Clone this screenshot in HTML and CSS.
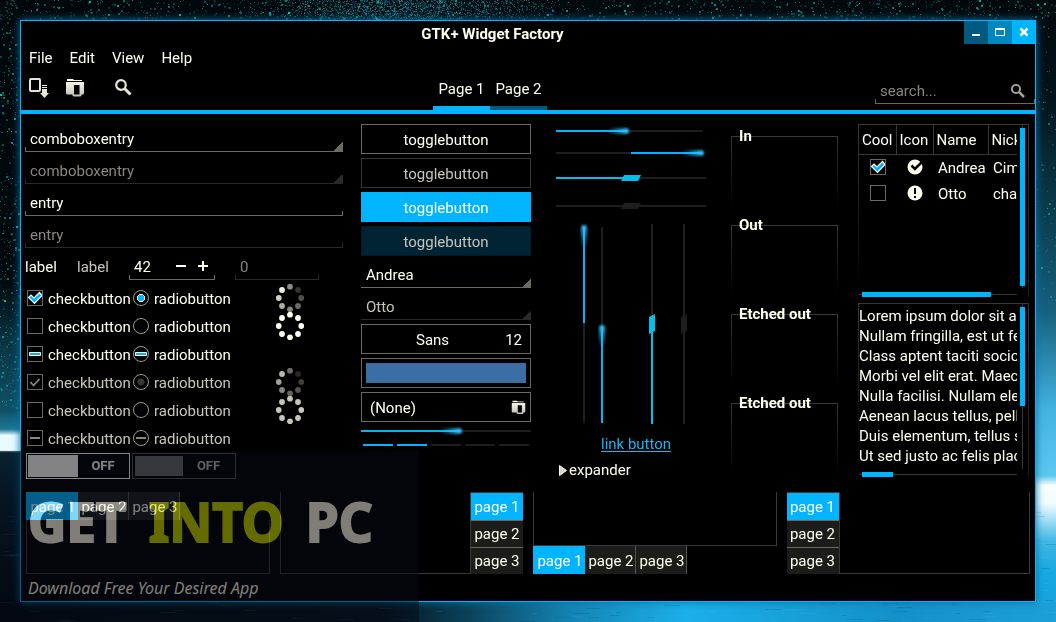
FILE: index.html
```html
<!DOCTYPE html>
<html lang="en">
<head>
<meta charset="utf-8">
<title>GTK+ Widget Factory</title>
<link rel="stylesheet" href="styles.css">
</head>
<body>
<canvas class="wallpaper" id="wallpaper" aria-hidden="true"></canvas>
<svg class="defs" aria-hidden="true">
  <linearGradient id="bone" x1="0" y1="0" x2="0" y2="1"><stop offset="0" stop-color="#fffff0"/><stop offset="1" stop-color="#c4c0b4"/></linearGradient>
  <symbol id="i-magnify" viewBox="0 0 20 20"><circle cx="7" cy="7" r="4.800" fill="none" stroke="currentColor" stroke-width="2.200"/><path d="M10.500 10.500L16.500 16.500" stroke="currentColor" stroke-width="3"/></symbol>
  <symbol id="i-folder" viewBox="0 0 20 20"><path fill="url(#bone)" fill-rule="evenodd" d="M2 1h6l1 1h8v1H2zM1 4h18v11.500l-1 1h-1.500v1l-1 1h-7l-1-1v-1H2l-1-1zM9 7v9.500h5.500V7z"/></symbol>
  <symbol id="i-add" viewBox="0 0 20 20"><rect x="1" y="1" width="10" height="12" rx="1" fill="none" stroke="currentColor" stroke-width="2"/><path fill="currentColor" d="M13 7h5v1h-5zM13 9h5v1h-5zM13 11h5v4h2l-4.500 5-4.500-5h2z"/></symbol>
  <symbol id="i-ring" viewBox="0 0 28 28"><g fill="currentColor"><circle cx="14" cy="2.700" r="2.900"/><circle cx="22" cy="6" r="2.900"/><circle cx="25.300" cy="14" r="2.900"/><circle cx="22" cy="22" r="2.900"/><circle cx="14" cy="25.300" r="2.900"/><circle cx="6" cy="22" r="2.900"/><circle cx="2.700" cy="14" r="2.900"/><circle cx="6" cy="6" r="2.900"/></g></symbol>
  <symbol id="i-spin" viewBox="0 0 28 28"><g fill="currentColor"><circle cx="14" cy="2.700" r="2.900" opacity=".55"/><circle cx="22" cy="6" r="2.900" opacity=".2"/><circle cx="25.300" cy="14" r="2.900" opacity=".32"/><circle cx="22" cy="22" r="2.900" opacity=".42"/><circle cx="14" cy="25.300" r="2.900" opacity=".52"/><circle cx="6" cy="22" r="2.900" opacity=".68"/><circle cx="2.700" cy="14" r="2.900" opacity=".82"/><circle cx="6" cy="6" r="2.900" opacity=".94"/></g></symbol>
</svg>
<main class="window">
  <header class="header">
    <div class="titlebar">
      <h1 class="title">GTK+ Widget Factory</h1>
      <button class="wm wm-min" aria-label="Minimize"><svg width="24" height="23"><path d="M8 13h8v2H8z" fill="#fff"/></svg></button>
      <button class="wm wm-max" aria-label="Maximize"><svg width="24" height="23"><path d="M7 7h10v8H7zM8 9v5h8V9z" fill="#fff" fill-rule="evenodd"/></svg></button>
      <button class="wm wm-close" aria-label="Close"><svg width="24" height="23"><path d="M8.500 7.500l7 7M15.500 7.500l-7 7" stroke="#fff" stroke-width="2.600"/></svg></button>
    </div>
    <nav class="menubar"><button>File</button><button>Edit</button><button>View</button><button>Help</button></nav>
    <div class="toolbar">
      <div class="tools">
        <button aria-label="Add"><svg width="20" height="20"><use href="#i-add"/></svg></button>
        <button aria-label="Open"><svg width="20" height="20"><use href="#i-folder"/></svg></button>
        <button class="tool-apart" aria-label="Find"><svg width="20" height="20"><use href="#i-magnify"/></svg></button>
      </div>
      <div class="pages"><button class="page-on">Page 1</button><button>Page 2</button></div>
      <label class="search"><input class="line-entry" type="search" placeholder="search..." aria-label="Search"><svg width="17" height="17"><use href="#i-magnify"/></svg></label>
    </div>
  </header>

  <section class="columns">
    <div class="col">
      <input class="line-entry combo" value="comboboxentry" aria-label="Combo entry">
      <input class="line-entry combo" value="comboboxentry" aria-label="Combo entry, inactive" disabled>
      <input class="line-entry" value="entry" aria-label="Entry">
      <input class="line-entry" value="entry" aria-label="Entry, inactive" disabled>
      <div class="spin-row">
        <span class="lab">label</span><span class="lab dim">label</span>
        <div class="spin"><input class="line-entry" value="42" aria-label="Number"><button aria-label="Decrease"><svg width="12" height="12"><path d="M1 5h10v2H1z" fill="currentColor"/></svg></button><button aria-label="Increase"><svg width="12" height="12"><path d="M1 5h10v2H1zM5 1h2v10H5z" fill="currentColor"/></svg></button></div>
        <input class="line-entry spin-off" value="0" aria-label="Number, inactive" disabled>
      </div>
      <div class="checks">
        <label><input type="checkbox" class="box tick" checked>checkbutton</label><label><input type="radio" name="a" class="box round dot" checked>radiobutton</label><svg class="ring"><use href="#i-spin"/></svg>
        <label><input type="checkbox" class="box">checkbutton</label><label><input type="radio" name="a" class="box round">radiobutton</label><svg class="ring"><use href="#i-ring"/></svg>
        <label><input type="checkbox" class="box mixed">checkbutton</label><label><input type="radio" name="b" class="box round mixed">radiobutton</label><span></span>
        <label class="dim"><input type="checkbox" class="box tick-off" checked disabled>checkbutton</label><label class="dim"><input type="radio" name="c" class="box round dot-off" checked disabled>radiobutton</label><svg class="ring dim"><use href="#i-spin"/></svg>
        <label class="dim"><input type="checkbox" class="box" disabled>checkbutton</label><label class="dim"><input type="radio" name="c" class="box round" disabled>radiobutton</label><svg class="ring dim"><use href="#i-ring"/></svg>
        <label class="dim"><input type="checkbox" class="box mixed-off" disabled>checkbutton</label><label class="dim"><input type="radio" name="d" class="box round mixed-off" disabled>radiobutton</label><span></span>
      </div>
      <div class="switches">
        <button class="switch" role="switch" aria-checked="false"><span class="knob"></span><span class="state">OFF</span></button>
        <button class="switch" role="switch" aria-checked="false" disabled><span class="knob"></span><span class="state">OFF</span></button>
      </div>
    </div>

    <div class="col">
      <button class="btn">togglebutton</button>
      <button class="btn" disabled>togglebutton</button>
      <button class="btn btn-on">togglebutton</button>
      <button class="btn btn-on" disabled>togglebutton</button>
      <select class="drop" aria-label="Name"><option>Andrea</option></select>
      <select class="drop" aria-label="Name, inactive" disabled><option>Otto</option></select>
      <button class="btn font-btn"><span>Sans</span><span>12</span></button>
      <button class="btn color-btn" aria-label="Pick a color"><span class="swatch"></span></button>
      <button class="btn file-btn"><span>(None)</span><svg width="15" height="15"><use href="#i-folder"/></svg></button>
      <div class="bar bar-spaced" role="progressbar"><span class="fill" style="width:58%"></span></div>
      <div class="levels"><i class="lit"></i><i class="lit"></i><i></i><i></i><i></i></div>
    </div>

    <div class="col gauges">
      <div class="bar" role="progressbar"><span class="fill" style="width:48%"></span></div>
      <div class="bar bar-second" role="progressbar"><span class="fill" style="width:48%;margin-left:51%"></span></div>
      <input type="range" class="scale" value="50" aria-label="Scale">
      <input type="range" class="scale" value="50" aria-label="Scale, inactive" disabled>
      <div class="verticals">
        <div class="vbar"><span class="vfill" style="height:49%"></span></div>
        <div class="vbar"><span class="vfill vfill-end" style="height:49%"></span></div>
        <input type="range" class="vscale" value="50" aria-label="Vertical scale">
        <input type="range" class="vscale" value="50" aria-label="Vertical scale, inactive" disabled>
      </div>
      <a class="link" href="#">link button</a>
      <details class="expander"><summary><svg width="8" height="11"><path d="M.5.5L7.500 5.500.5 10.500z" fill="#d8d4c8" stroke="#fffff0"/></svg>expander</summary></details>
    </div>

    <div class="col frames">
      <fieldset class="frame"><legend>In</legend></fieldset>
      <fieldset class="frame"><legend>Out</legend></fieldset>
      <fieldset class="frame"><legend>Etched out</legend></fieldset>
      <fieldset class="frame"><legend>Etched out</legend></fieldset>
    </div>

    <div class="col views">
      <div class="view tree">
        <div class="clip">
          <table>
            <thead><tr><th>Cool</th><th>Icon</th><th>Name</th><th>Nick</th></tr></thead>
            <tbody>
              <tr><td><input type="checkbox" class="box tick" aria-label="Andrea is cool" checked></td><td><svg width="16" height="16"><circle cx="8" cy="8" r="7.500" fill="#fffff0"/><path d="M4.500 6.500l3.400 3.400L16 2" fill="none" stroke="#000" stroke-width="2.600"/></svg></td><td>Andrea</td><td>Cimi</td></tr>
              <tr><td><input type="checkbox" class="box" aria-label="Otto is cool"></td><td><svg width="16" height="16"><circle cx="8" cy="8" r="7.500" fill="#fffff0"/><path d="M7 3h2v6H7zM7 11h2v2H7z" fill="#000"/></svg></td><td>Otto</td><td>chaotic</td></tr>
            </tbody>
          </table>
        </div>
        <div class="vscroll"><span style="height:99%"></span></div>
        <div class="hscroll"><span style="width:83%"></span></div>
      </div>
      <div class="view text">
        <div class="clip">Lorem ipsum dolor sit amet<br>Nullam fringilla, est ut feugiat<br>Class aptent taciti sociosqu<br>Morbi vel elit erat. Maecenas<br>Nulla facilisi. Nullam eleifend<br>Aenean lacus tellus, pellentesque<br>Duis elementum, tellus sit<br>Ut sed justo ac felis placerat</div>
        <div class="vscroll"><span style="height:61%"></span></div>
        <div class="hscroll"><span style="width:20%"></span></div>
      </div>
    </div>
  </section>

  <section class="books">
    <div class="book top"><div class="tabs"><button class="on">page 1</button><button>page 2</button><button>page 3</button></div><div class="leaf"></div></div>
    <div class="book right"><div class="leaf"></div><div class="tabs"><button class="on">page 1</button><button>page 2</button><button>page 3</button></div></div>
    <div class="book bottom"><div class="leaf"></div><div class="tabs"><button class="on">page 1</button><button>page 2</button><button>page 3</button></div></div>
    <div class="book left"><div class="tabs"><button class="on">page 1</button><button>page 2</button><button>page 3</button></div><div class="leaf"></div></div>
  </section>
</main>
<aside class="banner">
  <p class="banner-name"><span>GET</span><span class="lime">INTO</span><span>PC</span></p>
  <p class="banner-line">Download Free Your Desired App</p>
</aside>
<script src="wallpaper.js"></script>
</body>
</html>
```
FILE: styles.css
```css
* { box-sizing: border-box; }
body {
  margin: 0;
  min-height: 100vh;
  padding: 20px;
  display: flex;
  position: relative;
  background: #00060a;
  color: #fffff0;
  font: 15px/20px Roboto, "Liberation Sans", sans-serif;
}
button, input, select { font: inherit; color: inherit; background: none; border: 0; margin: 0; padding: 0; outline: 0; border-radius: 0; }
svg { display: block; }
.defs { position: absolute; width: 0; height: 0; }
.wallpaper { position: absolute; left: 0; top: 0; width: 100%; height: 100%; }
.dim { color: #c8c4b8; }

.window {
  flex: 1;
  min-width: 0;
  position: relative;
  display: flex;
  flex-direction: column;
  background: #000;
  border: 1px solid #00b4ff;
  box-shadow: 0 0 8px #0077b0;
}

/* header */
.header { border-bottom: 4px solid #00b4ff; }
.titlebar { display: flex; height: 24px; margin-right: -1px; }
.title { flex: 1; margin: 0; padding-top: 3px; text-align: center; font-size: 15px; font-weight: 700; line-height: 20px; }
.wm { width: 24px; height: 23px; }
.wm-min { background: #005a80; }
.wm-max { background: #0087bf; }
.wm-close { background: #00b4ff; }
.menubar { display: flex; gap: 17px; height: 26px; padding-left: 8px; }
.toolbar { display: grid; grid-template-columns: 412fr 114px 488fr; height: 39px; }
.tools { display: flex; gap: 16px; padding: 7px 8px 0; color: #e8e4d8; align-items: flex-start; }
.tool-apart { margin-left: 13px; }
.pages { display: flex; padding-top: 3px; }
.pages button { flex: 1; border-bottom: 4px solid #005a80; padding-bottom: 2px; }
.pages .page-on { border-color: #00b4ff; }
.search { position: relative; justify-self: end; width: 160px; padding-top: 5px; color: #a8a498; }
.search svg { position: absolute; right: 8px; top: 12px; }
.search ::placeholder { color: #8a867c; opacity: 1; }

/* entries */
.line-entry {
  --line: #6c6960;
  display: block;
  width: 100%;
  height: 28px;
  padding: 2px 5px 0;
  border-bottom: 1px solid var(--line);
  background: linear-gradient(var(--line), var(--line)) left bottom / 1px 4px no-repeat, linear-gradient(var(--line), var(--line)) right bottom / 1px 4px no-repeat;
}
.line-entry:disabled { --line: #2a2a28; color: #8a867c; }
.combo { background: linear-gradient(135deg, transparent 50%, #6c6960 50%) right bottom / 9px 9px no-repeat, linear-gradient(#6c6960, #6c6960) left bottom / 1px 4px no-repeat; }
.combo:disabled { background: linear-gradient(135deg, transparent 50%, #2a2a28 50%) right bottom / 9px 9px no-repeat, linear-gradient(#2a2a28, #2a2a28) left bottom / 1px 4px no-repeat; }
.drop { appearance: none; width: 100%; height: 28px; padding: 2px 5px 0; border-bottom: 1px solid #6c6960; background: linear-gradient(135deg, transparent 50%, #6c6960 50%) right bottom / 9px 9px no-repeat; }
.drop:disabled { border-color: #2a2a28; color: #c8c4b8; opacity: 1; background-image: linear-gradient(135deg, transparent 50%, #2a2a28 50%); }

/* columns */
.columns {
  display: grid;
  grid-template-columns: 318fr 170fr 164fr 107fr 173fr;
  column-gap: 18px;
  height: 378px;
  padding: 10px 6px 0 4px;
}
.col { display: flex; flex-direction: column; gap: 4px; min-width: 0; }
.spin-row { display: flex; align-items: flex-start; height: 29px; }
.lab { width: 52px; padding-top: 5px; }
.spin { display: flex; position: relative; width: 86px; margin-right: 20px; }
.spin button { position: absolute; right: 28px; top: 8px; }
.spin button + button { right: 6px; }
.spin-off { width: 84px; }
.checks { display: grid; grid-template-columns: 106px 108px 1fr; grid-auto-rows: 28px; padding-left: 2px; margin-top: -1px; }
.checks label { display: flex; gap: 5px; align-items: center; padding-top: 2px; }
.checks .box { margin-bottom: 2px; }
.ring { width: 28px; height: 28px; margin-left: 35px; overflow: visible; }
.box { appearance: none; flex: none; display: block; width: 16px; height: 16px; border: 1px solid #6c6960; background: center / 16px 16px no-repeat; background-origin: border-box; }
.round { border-color: #9c988c; border-radius: 50%; }
.tick { background-image: url("data:image/svg+xml,%3Csvg xmlns='http://www.w3.org/2000/svg' viewBox='0 0 16 16'%3E%3Cpath d='M1.500 7.500L4 5 7 8 12.500 2.500 15 5.500 7.500 13.500z' fill='%2300b4ff' stroke='%23fff' stroke-width='1.200'/%3E%3C/svg%3E"); }
.tick-off { background-image: url("data:image/svg+xml,%3Csvg xmlns='http://www.w3.org/2000/svg' viewBox='0 0 16 16'%3E%3Cpath d='M3.500 8l3 3.500 6-6.500' fill='none' stroke='%238c887c' stroke-width='1.800'/%3E%3C/svg%3E"); }
.mixed { background-image: url("data:image/svg+xml,%3Csvg xmlns='http://www.w3.org/2000/svg' viewBox='0 0 16 16'%3E%3Cpath d='M2.500 6.500h11v3h-11z' fill='%2300b4ff' stroke='%23fff'/%3E%3C/svg%3E"); }
.mixed-off { background-image: linear-gradient(#8c887c, #8c887c); background-size: 10px 2px; }
.dot { background-image: radial-gradient(circle, #00b4ff 3px, #fff 3px, #fff 4px, transparent 4px); }
.dot-off { background-image: radial-gradient(circle, #3a3834 3px, transparent 4px); }
.switches { display: flex; gap: 2px; margin-top: -3px; padding-left: 1px; }
.switch { display: flex; width: 104px; height: 26px; border: 1px solid #fffff0; padding: 1px; font-size: 13px; font-weight: 700; align-items: center; }
.switch:disabled { border-color: #55534c; color: #a8a498; }
.knob { width: 50px; height: 22px; background: #fffaf0; }
.switch:disabled .knob { width: 48px; height: 20px; margin-left: 1px; background: #666; }
.state { flex: 1; color: #fffff0; }
.switch:disabled .state { color: #b8b4a8; }

/* buttons */
.btn { display: block; flex: none; width: 100%; height: 30px; border: 1px solid #6c6960; padding: 1px 0 0; }
.btn:disabled { color: #c8c4b8; border-color: #363530; }
.btn-on { background: #00b4ff; border-color: #00b4ff; }
.btn-on:disabled { background: #002433; border-color: #001c28; }
.font-btn { display: flex; align-items: center; padding: 2px 8px 0; }
.font-btn span:first-child { flex: 1; padding-right: 10px; }
.color-btn { padding: 4px; }
.swatch { display: block; height: 20px; background: #3a6ea5; }
.file-btn { display: flex; align-items: center; justify-content: space-between; padding: 1px 4px 0 8px; }
.bar { height: 2px; background: #1e1e1e; }
.bar-spaced { margin-top: 4px; }
.fill { display: block; position: relative; height: 2px; background: #00b4ff; }
.fill::after { content: ""; position: absolute; right: -2px; top: -2px; width: 22px; height: 6px; border-radius: 4px; background: linear-gradient(90deg, transparent, #30c0ff); filter: blur(1px); }
.levels { display: flex; gap: 4px; padding: 8px 2px 0; }
.levels i { flex: 1; height: 2px; background: #1e1e1e; }
.levels .lit { background: #00b4ff; }

/* gauges */
.gauges { padding: 6px 7px 0; gap: 0; }
.bar-second { margin-top: 20px; }
.gauges .bar { margin-right: 3px; }
.scale { appearance: none; width: 100%; height: 8px; margin-top: 20px; background: linear-gradient(90deg, #00bfe8 50%, #1e1e1e 50%) center / 100% 2px no-repeat; }
.scale::-webkit-slider-thumb { appearance: none; width: 20px; height: 6px; background: #00bfe8; clip-path: polygon(15% 0, 100% 0, 85% 100%, 0 100%); }
.scale:disabled { background-image: linear-gradient(#1e1e1e, #1e1e1e); }
.scale:disabled::-webkit-slider-thumb { background: #1e1e1c; }
.verticals { display: grid; grid-template-columns: 18fr 18fr 50fr 32fr; width: 118px; height: 200px; margin: 14px 0 0 27px; }
.vbar { display: flex; width: 2px; height: 196px; margin-top: 3px; background: #1e1e1e; }
.vfill { display: block; position: relative; width: 2px; background: #00b4ff; }
.vfill-end { align-self: flex-end; }
.vfill::after { content: ""; position: absolute; left: -2px; top: -2px; width: 6px; height: 22px; border-radius: 4px; background: linear-gradient(#30c0ff, transparent); filter: blur(1px); }
.vscale { appearance: none; writing-mode: vertical-lr; direction: rtl; width: 8px; height: 200px; margin-left: 29px; background: linear-gradient(#1e1e1e 50%, #00bfe8 50%) center / 2px 100% no-repeat; }
.vscale + .vscale { margin-left: 11px; }
.vscale::-webkit-slider-thumb { appearance: none; width: 6px; height: 20px; background: #00bfe8; clip-path: polygon(0 15%, 100% 0, 100% 85%, 0 100%); }
.vscale:disabled { background-image: linear-gradient(#1e1e1e, #1e1e1e); }
.vscale:disabled::-webkit-slider-thumb { background: #1e1e1c; }
.link { margin: 10px 0 0 45px; align-self: flex-start; color: #18b4f4; text-decoration-thickness: 1px; text-decoration-skip-ink: none; text-underline-offset: 2px; }
.expander { margin: 6px 0 0 3px; }
.expander summary { display: flex; gap: 2px; align-items: center; list-style: none; }

/* frames: the outline starts at the middle of the legend and fades downwards */
.frames { gap: 7px; padding-top: 3px; }
.frame {
  flex: none;
  margin: 0;
  height: 82px;
  min-width: 0;
  padding: 0 8px;
  border: 0;
  background:
    linear-gradient(#383836, #383836) 0 0 / 100% 1px no-repeat,
    linear-gradient(#383836, transparent) 0 0 / 1px 72px no-repeat,
    linear-gradient(#383836, transparent) 100% 0 / 1px 72px no-repeat;
}
.frame legend { padding: 0; font-weight: 700; line-height: 18px; white-space: nowrap; }

/* scrolled views */
.views { padding-left: 2px; gap: 6px; }
.view {
  display: grid;
  grid-template-columns: minmax(0, 1fr) 5px;
  column-gap: 3px;
  padding: 1px 4px 0 1px;
  background:
    linear-gradient(#383836, #383836) 0 0 / 100% 1px no-repeat,
    linear-gradient(#383836, transparent) 0 0 / 1px 100% no-repeat,
    linear-gradient(#383836, #1a1a1a) 100% 0 / 1px 100% no-repeat;
}
.clip { overflow: hidden; white-space: nowrap; }
.tree { grid-template-rows: 163px 9px; }
.text { grid-template-rows: 165px 8px; }
.text .clip { padding-top: 2px; }
.vscroll { padding-top: 3px; background: linear-gradient(#383836, #383836) center / 1px 100% no-repeat; }
.vscroll span { display: block; background: #00b4ff; }
.hscroll { height: 5px; align-self: end; padding-left: 3px; background: linear-gradient(#383836, #383836) center / 100% 1px no-repeat; }
.hscroll span { display: block; height: 5px; background: #00b4ff; }
.tree table { border-collapse: collapse; table-layout: fixed; width: 186px; }
.tree th { height: 29px; padding: 2px 0 0 3px; text-align: left; font-weight: 400; border-right: 1px solid #383836; border-bottom: 1px solid #383836; }
.tree th:nth-child(1) { width: 37px; }
.tree th:nth-child(2) { width: 37px; }
.tree th:nth-child(3) { width: 55px; }
.tree td { height: 26px; padding: 2px 0 0 5px; }
.tree td .box, .tree td svg { margin: 0 auto; }
.tree td:nth-child(1) { padding: 0 0 0 1px; }
.tree td:nth-child(2) { padding: 0; }

/* notebooks */
.books { display: grid; grid-template-columns: repeat(4, 1fr); gap: 10px; padding: 0 5px 27px; }
.book { display: flex; height: 82px; }
.top, .bottom { flex-direction: column; }
.tabs { display: flex; }
.right .tabs, .left .tabs { flex-direction: column; width: 53px; border: solid #383836; border-width: 1px 0 0 1px; }
.left .tabs { border-width: 1px 1px 0 0; }
.tabs button { flex: 1; background: #1c1c1a; border-top: 1px solid #6c6960; padding: 0; }
.tabs .on { background: #00b4ff; border-color: #00b4ff; }
.top .tabs button, .bottom .tabs button { flex: none; width: 51px; height: 28px; border: 0; border-right: 1px solid #55534c; padding: 2px 0 0 2px; }
.top .tabs .on, .bottom .tabs .on { width: 52px; border: 0; }
.leaf { flex: 1; border: 1px solid #383836; }
.top .leaf, .right .leaf, .bottom .leaf, .left .leaf { border-top: 0; }
.right .leaf { border-right: 0; }
.left .leaf { border-left: 0; }

/* banner over the desktop */
.banner { position: absolute; left: 0; bottom: 0; width: 419px; height: 171px; padding: 36px 0 0 28px; background: #060a16; opacity: .5; color: #fffaee; pointer-events: none; }
.banner p { margin: 0; white-space: nowrap; }
.banner-name { display: flex; gap: 22px; font: 700 53px/70px "Noto Sans", sans-serif; -webkit-text-stroke: 2px currentColor; }
.lime { color: #c8d800; }
.banner-line { padding-top: 20px; font: italic 16px/22px "Noto Sans", sans-serif; }
```
FILE: wallpaper.js
```js
// Paints the night sky, the glowing horizon and the water behind the window.
(function () {
  var canvas = document.getElementById('wallpaper');
  var w = canvas.width = canvas.clientWidth;
  var h = canvas.height = canvas.clientHeight;
  var c = canvas.getContext('2d');
  var seed = 7;
  function rnd() { seed = (seed * 16807) % 2147483647; return seed / 2147483647; }
  function fill(x, y, fw, fh, vertical, stops) {
    var g = vertical ? c.createLinearGradient(0, y, 0, y + fh) : c.createLinearGradient(x, 0, x + fw, 0);
    stops.forEach(function (s) { g.addColorStop(s[0], s[1]); });
    c.fillStyle = g;
    c.fillRect(x, y, fw, fh);
  }
  fill(0, 0, w / 2, h, true, [[0, '#01080b'], [.45, '#01090d'], [.55, '#0a3443'], [.66, '#105066'], [.69, '#1c7896'], [.7, '#e8fbff'], [.724, '#e8fbff'], [.728, '#0a3a50'], [.8, '#052130'], [1, '#010508']]);
  fill(w / 2, 0, w / 2, h, true, [[0, '#02090c'], [.15, '#021218'], [.35, '#0c3e50'], [.5, '#16607e'], [.66, '#44b4e0'], [.765, '#5cc8f0'], [.78, '#fafff8'], [.81, '#f0fcff'], [.87, '#40b8e4'], [.92, '#18a8e0'], [1, '#18a0dc']]);
  fill(0, h - 20, w, 20, false, [[0, '#02080c'], [.36, '#03141c'], [.44, '#0b4058'], [.54, '#1484b4'], [.65, '#1cb0e8'], [.85, '#1490c8'], [1, '#1ca0d8']]);
  // stars, drawn only in the strips that the window leaves free
  function star(x, y) {
    c.fillStyle = 'rgba(' + (rnd() * 40 | 0) + ',' + (150 + rnd() * 80 | 0) + ',' + (150 + rnd() * 50 | 0) + ',' + (.15 + rnd() * rnd() * .8) + ')';
    var s = rnd() > .7 ? 2 : 1;
    c.fillRect(x | 0, y | 0, s, s);
  }
  for (var i = 0; i < 1100; i++) star(rnd() * w, rnd() * 20);
  for (i = 0; i < 420; i++) star(rnd() * 20, rnd() * h * .66);
  for (i = 0; i < 90; i++) star(w - rnd() * 20, rnd() * h * .5);
  // the dense band of the milky way
  for (i = 0; i < 3200; i++) {
    var bx = w * .38 + (rnd() + rnd() + rnd() - 1.5) * 130;
    c.fillStyle = 'rgba(20,' + (110 + rnd() * 90 | 0) + ',' + (150 + rnd() * 60 | 0) + ',' + rnd() * .6 + ')';
    c.fillRect(bx | 0, rnd() * 20 | 0, 1, 1);
  }
  // ripples
  for (i = 0; i < 500; i++) {
    c.fillStyle = rnd() > .5 ? 'rgba(0,40,70,.14)' : 'rgba(130,220,255,.1)';
    c.fillRect(rnd() * w | 0, h * .8 + rnd() * h * .2 | 0, 4 + rnd() * 14, 1);
  }
})();
```
